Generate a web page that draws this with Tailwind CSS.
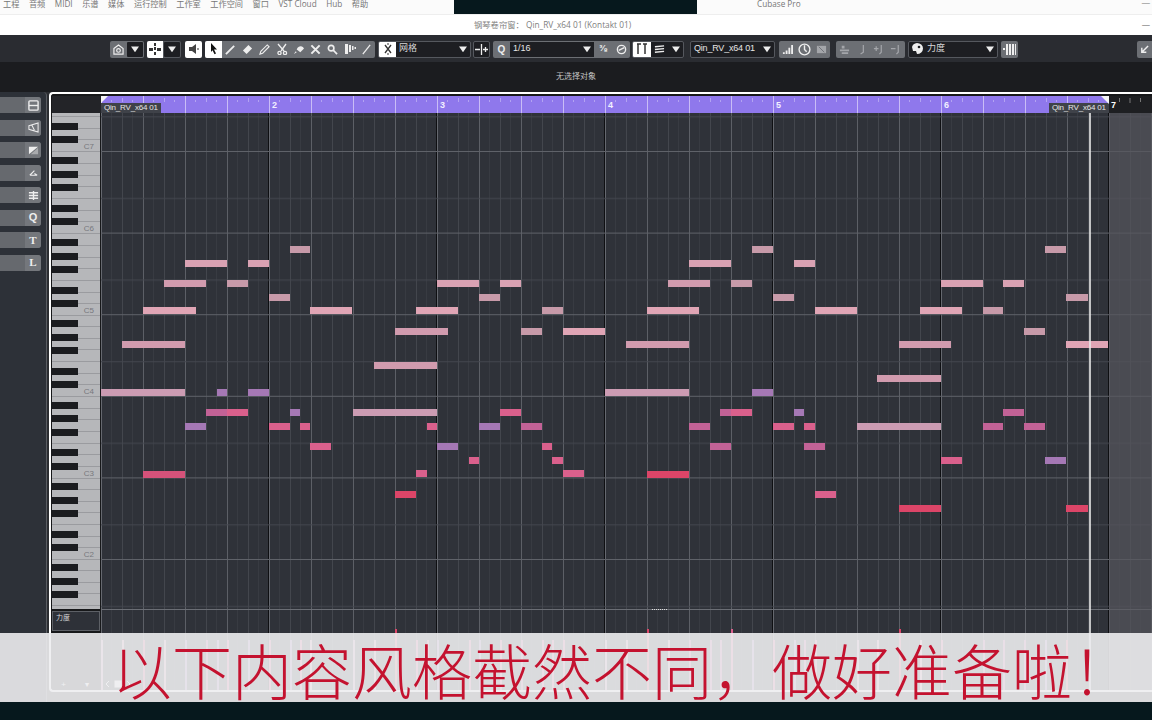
<!DOCTYPE html>
<html lang="zh">
<head>
    <meta charset="UTF-8">
    <meta name="viewport" content="width=device-width, initial-scale=1.0">
    <title>钢琴卷帘窗</title>
    <script src="https://cdn.jsdelivr.net/npm/@tailwindcss/browser@4"></script>
</head>
<body class="relative w-[1152px] h-[720px] overflow-hidden bg-[#2b2d31] flex flex-col font-['Liberation_Sans','Noto_Sans_CJK_SC',sans-serif]">

    <!-- menu bar -->
    <div class="h-[14px] shrink-0 bg-[#fbfbfb] flex overflow-hidden text-[8.2px] leading-[8px] text-[#777]">
        <div class="w-[454px] flex gap-[9.5px] pl-[3px] font-['Open_Sans','Noto_Sans_CJK_SC',sans-serif]">
            <span>工程</span><span>音频</span><span>MIDI</span><span>乐谱</span><span>媒体</span><span>运行控制</span><span>工作室</span><span>工作空间</span><span>窗口</span><span>VST Cloud</span><span>Hub</span><span>帮助</span>
        </div>
        <div class="w-[243px] bg-[#06181d]"></div>
        <div class="pl-[60px] font-['Open_Sans',sans-serif]">Cubase Pro</div>
        <div class="ml-auto pr-[2px]">—</div>
    </div>

    <!-- window title -->
    <div class="h-[21px] shrink-0 bg-white border-t border-[#eeeeee] flex items-center pl-[474px] pr-[2px] text-[8.3px] text-[#808080] font-['Open_Sans','Noto_Sans_CJK_SC',sans-serif]">
        <span>钢琴卷帘窗： Qin_RV_x64 01 (Kontakt 01)</span>
        <span class="ml-auto">—</span>
    </div>

    <!-- toolbar -->
    <div class="h-[27px] shrink-0 bg-[#2a2c31] flex items-center pl-[110px] pt-[1px] text-[9px] text-[#d8d8d8]">
        <div class="w-[34px] h-[17px] flex rounded-[2px] overflow-hidden bg-[#6c6f74]">
            <div class="w-[17px] flex items-center justify-center">
                <svg class="w-[11px] h-[11px]" viewBox="0 0 12 12" fill="none" stroke="#eee" stroke-width="1.3"><path d="M1 5l5-4 5 4v6H1z"/><circle cx="6" cy="7" r="2"/></svg>
            </div>
            <div class="w-[17px] m-[1px] rounded-[1px] bg-[#1d1e22] flex items-center justify-center">
                <svg class="w-[8px] h-[8px]" viewBox="0 0 10 10" fill="#eee"><path d="M0 2h10L5 9z"/></svg>
            </div>
        </div>
        <div class="ml-[3px] w-[34px] h-[17px] flex rounded-[2px] overflow-hidden bg-[#55585e]">
            <div class="w-[17px] bg-white flex items-center justify-center">
                <svg class="w-[12px] h-[12px]" viewBox="0 0 12 12" fill="#333"><path d="M5 0h2v3H5zM0 5h4v3H0zM8 5h4v3H8zM5 4h2v3H5zM5 9h2v3H5z"/></svg>
            </div>
            <div class="w-[17px] m-[1px] rounded-[1px] bg-[#1d1e22] flex items-center justify-center">
                <svg class="w-[8px] h-[8px]" viewBox="0 0 10 10" fill="#eee"><path d="M0 2h10L5 9z"/></svg>
            </div>
        </div>
        <div class="ml-[4px] w-[17px] h-[17px] rounded-[2px] bg-white flex items-center justify-center">
            <svg class="w-[12px] h-[12px]" viewBox="0 0 12 12" fill="#444"><path d="M1 4h3l4-3v10L4 8H1z"/><path d="M9 5h2v2H9z" fill="#999"/></svg>
        </div>

        <!-- tool group -->
        <div class="ml-[3px] w-[170px] h-[17px] flex rounded-[2px] overflow-hidden bg-[#6c6f74]">
            <div class="w-[17px] bg-white flex items-center justify-center">
                <svg class="w-[11px] h-[12px]" viewBox="0 0 11 12" fill="#111"><path d="M3 0l6 6.5H6l2 4-1.5.8-2-4L3 9z"/></svg>
            </div>
            <div class="w-[17px] flex items-center justify-center">
                <svg class="w-[11px] h-[11px]" viewBox="0 0 12 12" fill="none" stroke="#eee" stroke-width="2"><path d="M1 11L10 2"/></svg>
            </div>
            <div class="w-[17px] flex items-center justify-center">
                <svg class="w-[11px] h-[11px]" viewBox="0 0 12 12" fill="#eee"><path d="M7 1l4 4-6 6-4-4z"/></svg>
            </div>
            <div class="w-[17px] flex items-center justify-center">
                <svg class="w-[11px] h-[11px]" viewBox="0 0 12 12" fill="none" stroke="#eee" stroke-width="1.2"><path d="M1 11l1-3 7-7 2 2-7 7z"/></svg>
            </div>
            <div class="w-[17px] flex items-center justify-center">
                <svg class="w-[12px] h-[12px]" viewBox="0 0 12 12" fill="none" stroke="#eee" stroke-width="1.3"><path d="M2 1l6 7M10 1L5 8"/><circle cx="3.5" cy="10" r="1.6"/><circle cx="9" cy="10" r="1.6"/></svg>
            </div>
            <div class="w-[17px] flex items-center justify-center">
                <svg class="w-[11px] h-[11px]" viewBox="0 0 12 12" fill="#eee"><path d="M5 4a4 4 0 0 1 7 1L8 9 4 6z"/><path d="M3 8l1 1-3 2z"/></svg>
            </div>
            <div class="w-[17px] flex items-center justify-center">
                <svg class="w-[11px] h-[11px]" viewBox="0 0 12 12" fill="none" stroke="#eee" stroke-width="2.2"><path d="M1.500 1.500l9 9M10.500 1.500l-9 9"/></svg>
            </div>
            <div class="w-[17px] flex items-center justify-center">
                <svg class="w-[11px] h-[11px]" viewBox="0 0 12 12" fill="none" stroke="#eee" stroke-width="1.8"><circle cx="4.500" cy="4.500" r="3"/><path d="M7 7l4 4"/></svg>
            </div>
            <div class="w-[17px] flex items-center justify-center">
                <svg class="w-[12px] h-[12px]" viewBox="0 0 12 12" fill="#eee"><path d="M1 1h3v10H1zM5 2h2v7H5zM8 3h1.500v4H8zM10.500 4H12v2h-1.500z"/></svg>
            </div>
            <div class="w-[17px] flex items-center justify-center">
                <svg class="w-[11px] h-[11px]" viewBox="0 0 12 12" fill="none" stroke="#eee" stroke-width="1.400"><path d="M2 11l8-10"/></svg>
            </div>
        </div>

        <!-- grid type -->
        <div class="ml-[3px] w-[93px] h-[17px] flex rounded-[2px] overflow-hidden bg-[#1d1e22] border border-[#55585e]">
            <div class="w-[17px] bg-white flex items-center justify-center">
                <svg class="w-[12px] h-[12px]" viewBox="0 0 12 12" fill="none" stroke="#333" stroke-width="1.300"><path d="M3 2l6 8M9 2l-6 8"/><path d="M6 0v2M6 10v2" stroke-width="1"/></svg>
            </div>
            <div class="flex-1 flex items-center justify-between pl-[3px] pr-[3px]">
                <span>网格</span>
                <svg class="w-[8px] h-[8px]" viewBox="0 0 10 10" fill="#eee"><path d="M0 2h10L5 9z"/></svg>
            </div>
        </div>
        <div class="ml-[2px] w-[17px] h-[17px] rounded-[2px] bg-[#1d1e22] border border-[#55585e] flex items-center justify-center">
            <svg class="w-[13px] h-[11px]" viewBox="0 0 13 11" fill="none" stroke="#eee" stroke-width="1.300"><path d="M6.500 0v11M0 5.500h5M8 5.500h5M10.500 3v5"/></svg>
        </div>

        <!-- quantize -->
        <div class="ml-[3px] w-[137px] h-[17px] flex rounded-[2px] overflow-hidden bg-[#6c6f74]">
            <div class="w-[17px] flex items-center justify-center text-[10px] font-bold text-[#eee]">Q</div>
            <div class="w-[84px] my-[1px] bg-[#1d1e22] flex items-center justify-between px-[3px]">
                <span class="text-[#e6e6e6]">1/16</span>
                <svg class="w-[8px] h-[8px]" viewBox="0 0 10 10" fill="#eee"><path d="M0 2h10L5 9z"/></svg>
            </div>
            <div class="w-[18px] flex items-center justify-center text-[9px] font-bold text-[#eee]">⅜</div>
            <div class="w-[18px] flex items-center justify-center">
                <svg class="w-[11px] h-[11px]" viewBox="0 0 12 12" fill="none" stroke="#eee" stroke-width="1.500"><circle cx="6" cy="6" r="4.500"/><path d="M3 7l6-3"/></svg>
            </div>
        </div>

        <!-- length / colours -->
        <div class="ml-[2px] w-[52px] h-[17px] flex rounded-[2px] overflow-hidden bg-[#1d1e22] border border-[#55585e]">
            <div class="w-[18px] bg-white flex items-center justify-center">
                <svg class="w-[12px] h-[12px]" viewBox="0 0 12 12" fill="none" stroke="#333" stroke-width="1.500"><path d="M1 1h4M7 1h4M2 1v10M9 1v10"/></svg>
            </div>
            <div class="w-[17px] flex items-center justify-center">
                <svg class="w-[11px] h-[11px]" viewBox="0 0 12 12" fill="none" stroke="#eee" stroke-width="1.500"><path d="M1 3l10-1M1 6l10-1M1 9l10-1"/></svg>
            </div>
            <div class="flex-1 flex items-center justify-center">
                <svg class="w-[8px] h-[8px]" viewBox="0 0 10 10" fill="#eee"><path d="M0 2h10L5 9z"/></svg>
            </div>
        </div>

        <!-- part -->
        <div class="ml-[6px] w-[85px] h-[17px] rounded-[2px] bg-[#1d1e22] border border-[#55585e] flex items-center justify-between px-[3px] text-[#e6e6e6]">
            <span class="tracking-[-0.2px]">Qin_RV_x64 01</span>
            <svg class="w-[8px] h-[8px]" viewBox="0 0 10 10" fill="#eee"><path d="M0 2h10L5 9z"/></svg>
        </div>

        <div class="ml-[4px] w-[51px] h-[17px] flex rounded-[2px] bg-[#6c6f74]">
            <div class="w-[17px] flex items-center justify-center">
                <svg class="w-[11px] h-[11px]" viewBox="0 0 12 12" fill="#eee"><path d="M1 9h2v2H1zM4 7h2v4H4zM7 4h2v7H7zM10 1h2v10h-2z"/></svg>
            </div>
            <div class="w-[17px] flex items-center justify-center">
                <svg class="w-[13px] h-[13px]" viewBox="0 0 12 12" fill="none" stroke="#eee" stroke-width="1.300"><circle cx="6" cy="6" r="5"/><path d="M6 2v4l2 2"/></svg>
            </div>
            <div class="w-[17px] flex items-center justify-center">
                <svg class="w-[11px] h-[11px]" viewBox="0 0 12 12" fill="#a4a6aa"><path d="M1 2h10v8H1z"/><path d="M3 3l6 6" stroke="#6c6f74"/></svg>
            </div>
        </div>
        <div class="ml-[6px] w-[69px] h-[17px] flex rounded-[2px] bg-[#6c6f74] text-[#a4a6aa]">
            <div class="w-[17px] flex items-center justify-center">
                <svg class="w-[11px] h-[11px]" viewBox="0 0 12 12" fill="#a4a6aa"><path d="M3 2h3v3H3zM1 6h10v2H1zM3 9h7v2H3z"/></svg>
            </div>
            <div class="w-[17px] flex items-center justify-center">
                <svg class="w-[11px] h-[11px]" viewBox="0 0 12 12" fill="none" stroke="#a4a6aa" stroke-width="1.300"><path d="M8 1v8L5 11"/></svg>
            </div>
            <div class="w-[17px] flex items-center justify-center">
                <svg class="w-[11px] h-[11px]" viewBox="0 0 12 12" fill="none" stroke="#a4a6aa" stroke-width="1.300"><path d="M1 5h5M3.500 2.500v5M9 1v8l-2 2"/></svg>
            </div>
            <div class="w-[17px] flex items-center justify-center">
                <svg class="w-[11px] h-[11px]" viewBox="0 0 12 12" fill="none" stroke="#a4a6aa" stroke-width="1.300"><path d="M1 5h5M9 1v8l-2 2"/></svg>
            </div>
        </div>

        <!-- controller -->
        <div class="ml-[3px] w-[90px] h-[17px] rounded-[2px] bg-[#1d1e22] border border-[#55585e] flex items-center px-[2px]">
            <svg class="w-[13px] h-[12px]" viewBox="0 0 13 12" fill="#eee"><path d="M6 0a6 5.500 0 1 1 0 11l-1-3H2L1 4a6 5 0 0 1 5-4z"/><circle cx="8" cy="4" r="1.300" fill="#1d1e22"/></svg>
            <span class="ml-[3px]">力度</span>
            <svg class="ml-auto mr-[1px] w-[8px] h-[8px]" viewBox="0 0 10 10" fill="#eee"><path d="M0 2h10L5 9z"/></svg>
        </div>
        <div class="ml-[3px] w-[17px] h-[17px] rounded-[2px] bg-[#6c6f74] flex items-center justify-center">
            <svg class="w-[13px] h-[11px]" viewBox="0 0 13 11" fill="#eee"><path d="M3 0h2v11H3zM6 0h2v11H6zM9 0h2v11H9zM12 0h1v11h-1zM0 4h2v2H0z"/></svg>
        </div>
        <div class="ml-auto w-[15px] h-[17px] rounded-l-[2px] bg-[#6c6f74] flex items-center justify-center">
            <svg class="w-[9px] h-[9px]" viewBox="0 0 10 10" fill="none" stroke="#eee" stroke-width="1.600"><path d="M9 1L2 8M2 3v5h5"/></svg>
        </div>
    </div>

    <!-- info line -->
    <div class="h-[30px] shrink-0 bg-[#1b1c1f] flex items-center justify-center text-[8px] text-[#c4c4c4]">无选择对象</div>

    <!-- editor -->
    <div class="flex-1 flex min-h-0">
        <!-- left inspector -->
        <div class="w-[47px] shrink-0 bg-[#2d3138] border-r border-[#5a5d63] rounded-tr-[4px] flex flex-col gap-[6.500px] pt-[5px] pr-[5px]">
            <div class="h-[16px] flex rounded-r-[3px] bg-[#66696e]">
                <div class="w-[25px]"></div>
                <div class="flex-1 bg-[#74777c] rounded-r-[3px] flex items-center justify-center">
                    <svg class="w-[11px] h-[11px]" viewBox="0 0 12 12" fill="none" stroke="#eee" stroke-width="1.500"><rect x="1" y="1" width="10" height="10" rx="1"/><path d="M1 6h10"/></svg>
                </div>
            </div>
            <div class="h-[16px] flex rounded-r-[3px] bg-[#66696e]">
                <div class="w-[25px]"></div>
                <div class="flex-1 bg-[#74777c] rounded-r-[3px] flex items-center justify-center">
                    <svg class="w-[11px] h-[11px]" viewBox="0 0 12 12" fill="none" stroke="#eee" stroke-width="1.100"><path d="M1 4l10-3v10L1 8zM4 3l3 6"/></svg>
                </div>
            </div>
            <div class="h-[16px] flex rounded-r-[3px] bg-[#66696e]">
                <div class="w-[25px]"></div>
                <div class="flex-1 bg-[#74777c] rounded-r-[3px] flex items-center justify-center">
                    <svg class="w-[11px] h-[11px]" viewBox="0 0 12 12" fill="#eee"><path d="M1 2h10L1 10z"/><path d="M11 3v7H3z" fill="#a9abae"/></svg>
                </div>
            </div>
            <div class="h-[16px] flex rounded-r-[3px] bg-[#66696e]">
                <div class="w-[25px]"></div>
                <div class="flex-1 bg-[#74777c] rounded-r-[3px] flex items-center justify-center">
                    <svg class="w-[11px] h-[11px]" viewBox="0 0 12 12" fill="none" stroke="#eee" stroke-width="1.300"><path d="M2 9l5-5M2 9h8M7 7l3 2"/></svg>
                </div>
            </div>
            <div class="h-[16px] flex rounded-r-[3px] bg-[#66696e]">
                <div class="w-[25px]"></div>
                <div class="flex-1 bg-[#74777c] rounded-r-[3px] flex items-center justify-center">
                    <svg class="w-[11px] h-[11px]" viewBox="0 0 12 12" fill="none" stroke="#eee" stroke-width="1.500"><path d="M1 3h10M1 6h10M1 9h10M6 1v10"/></svg>
                </div>
            </div>
            <div class="h-[16px] flex rounded-r-[3px] bg-[#66696e]">
                <div class="w-[25px]"></div>
                <div class="flex-1 bg-[#74777c] rounded-r-[3px] flex items-center justify-center text-[11px] leading-none font-bold text-[#eee]">Q</div>
            </div>
            <div class="h-[16px] flex rounded-r-[3px] bg-[#66696e]">
                <div class="w-[25px]"></div>
                <div class="flex-1 bg-[#74777c] rounded-r-[3px] flex items-center justify-center text-[11px] leading-none font-bold text-[#eee] font-['Liberation_Serif',serif]">T</div>
            </div>
            <div class="h-[16px] flex rounded-r-[3px] bg-[#66696e]">
                <div class="w-[25px]"></div>
                <div class="flex-1 bg-[#74777c] rounded-r-[3px] flex items-center justify-center text-[11px] leading-none font-bold text-[#eee] font-['Liberation_Serif',serif]">L</div>
            </div>
        </div>

        <!-- white framed key editor -->
        <div class="ml-[2px] flex-1 min-w-0 h-[600px] border-2 border-r-0 border-white rounded-l-[4px] bg-[#17181a] pt-[2px] flex flex-col overflow-hidden">
            <!-- ruler -->
            <div class="h-[17px] shrink-0 flex">
                <div class="w-[49px] shrink-0 ml-[1px] bg-[#232428]"></div>
                <div class="relative w-[1008px] h-[17px] shrink-0 bg-[#8f78ec] grid grid-cols-6 text-[9px] font-bold text-[#f2f0ff]">
                    <svg class="absolute inset-0 w-full h-full" xmlns="http://www.w3.org/2000/svg">
                        <defs>
                            <pattern id="rulerTicks" width="42" height="17" patternUnits="userSpaceOnUse">
                                <path d="M.5 0v17" stroke="#c9bdf6" />
                                <path d="M21.500 2v4M10.500 4v2M31.500 4v2" stroke="#b3a3f2" />
                            </pattern>
                        </defs>
                        <rect width="1008" height="17" fill="url(#rulerTicks)" />
                    </svg>
                    <div class="relative h-[17px] flex items-end">
                        <span class="bg-[#3f4249] w-[60px] h-[10px] text-[8px] leading-[10px] font-normal text-[#e6e6e6] pl-[3px] tracking-[-0.2px] whitespace-nowrap">Qin_RV_x64 01</span>
                    </div>
                    <div class="relative h-[17px] pl-[3px] pt-[5px] leading-none">2</div>
                    <div class="relative h-[17px] pl-[3px] pt-[5px] leading-none">3</div>
                    <div class="relative h-[17px] pl-[3px] pt-[5px] leading-none">4</div>
                    <div class="relative h-[17px] pl-[3px] pt-[5px] leading-none">5</div>
                    <div class="relative h-[17px] pl-[3px] flex items-end justify-between">
                        <span class="pb-[3px] leading-none">6</span>
                        <span class="bg-[#3f4249] w-[60px] h-[10px] text-[8px] leading-[10px] font-normal text-[#e6e6e6] pl-[3px] tracking-[-0.2px] whitespace-nowrap">Qin_RV_x64 01</span>
                    </div>
                    <svg class="absolute inset-0 w-full h-full" xmlns="http://www.w3.org/2000/svg">
                        <path d="M0 0h7L0 7zM1008 0h-8l8 8z" fill="#f4f4f4" />
                    </svg>
                </div>
                <div class="flex-1 bg-[#1e1f22] pl-[2px] pt-[5px] text-[9px] font-bold text-white leading-none relative">
                    7
                    <svg class="absolute inset-0 w-full h-[7px]" xmlns="http://www.w3.org/2000/svg">
                        <path d="M10.500 2v4M21 2v5M31.500 2v4" stroke="#777" fill="none" />
                    </svg>
                </div>
            </div>

            <div class="flex-1 flex min-h-0">
                <!-- keyboard + controller label -->
                <div class="w-[48px] shrink-0 ml-[1px] mr-[1px] flex flex-col">
                    <div id="piano" class="relative h-[496px] shrink-0 bg-[#b6b7ba] overflow-hidden text-[8px] text-[#77787d]"></div>
                    <div class="mt-[2px] h-[20px] border border-[#5d6066] bg-[#2e3138] text-[7px] leading-[10px] text-[#d8d8d8] pl-[3px] pt-[1px]">力度</div>
                    <div class="mt-[50px] flex justify-around w-[46px] text-[8px] leading-none text-white">
                        <span>+</span><span>▾</span>
                    </div>
                </div>

                <!-- note grid -->
                <div id="grid" class="relative flex-1 min-w-0 bg-[#2f3239] overflow-hidden">
                    <svg class="absolute inset-0 w-full h-full" xmlns="http://www.w3.org/2000/svg">
                        <defs>
                            <pattern id="cols" width="168" height="20" patternUnits="userSpaceOnUse">
                                <path d="M10.500 0v20M31.500 0v20M52.500 0v20M73.500 0v20M94.500 0v20M115.500 0v20M136.500 0v20M157.500 0v20" stroke="#383b42" />
                                <path d="M21.500 0v20M63.500 0v20M105.500 0v20M147.500 0v20" stroke="#43464d" />
                                <path d="M42.500 0v20M84.500 0v20M126.500 0v20" stroke="#5c5f66" />
                                <path d="M.5 0v20" stroke="#65686f" />
                                <path d="M167.500 0v20" stroke="#0e0f12" />
                            </pattern>
                            <pattern id="rows" width="1100" height="81.600" y="38" patternUnits="userSpaceOnUse">
                                <path d="M0 .5h1100" stroke="#5f6269" />
                                <path d="M0 47.500h1100" stroke="#44474e" />
                            </pattern>
                        </defs>
                        <rect width="1100" height="600" fill="url(#cols)" />
                        <rect width="1100" height="496" fill="url(#rows)" />
                        <path d="M0 496.500h1100" stroke="#6b6e75" />
                    </svg>
                    <div class="absolute left-[1008px] top-0 bottom-0 w-[60px] bg-[#55565c]/70"></div>
                    <div id="notes"></div>
                    <div class="absolute left-[988px] top-[-17px] bottom-0 w-[2px] bg-[#e8e8e8]/80"></div>
                    <div class="absolute left-[551px] top-[496px] w-[15px] border-t border-dotted border-[#dddddd]"></div>
                    <svg class="absolute left-[4px] top-[567px] w-[26px] h-[8px]" viewBox="0 0 26 8" fill="none" stroke="#fff">
                        <path d="M4 1L1 4l3 3M22 1l3 3-3 3"/>
                        <rect x="10" y="1" width="6" height="6" fill="#fff"/>
                    </svg>
                </div>
            </div>
        </div>
    </div>

    <!-- subtitle band -->
    <div class="absolute left-0 right-0 top-[633px] h-[69px] bg-[#ededef]/90 flex items-center pl-[112px] overflow-hidden">
        <span class="text-[60px] leading-none whitespace-nowrap font-light text-[#c4122f] font-['Noto_Sans_CJK_SC',sans-serif] mt-[2px]">以下内容风格截然不同，做好准备啦！</span>
    </div>
    <div class="absolute left-0 right-0 top-[702px] bottom-0 bg-[#06181d]"></div>

    <script>
        // piano keys, octave = 81.6px, C2..C7 bottom edges in page coords
        const piano = document.getElementById('piano');
        const octaves = [[151, 'C7'], [233, 'C6'], [315, 'C5'], [396, 'C4'], [477.5, 'C3'], [559, 'C2'], [640, ''], [69.5, '']];
        let html = '';
        octaves.forEach(([bottom, name]) => {
            const b = bottom - 113;
            for (let i = 0; i < 7; i++) {
                html += `<div class="absolute left-0 right-0 h-px bg-[#9a9b9f]" style="top:${b - i * 11.66}px"></div>`;
            }
            [10.2, 23.8, 44.2, 57.8, 71.4].forEach(off => {
                html += `<div class="absolute left-0 w-[26px] h-[7px] bg-[#1b1c1f]" style="top:${b - off - 4.5}px"></div>`;
            });
            if (name) html += `<span class="absolute right-[6px] leading-none" style="top:${b - 8}px">${name}</span>`;
        });
        piano.innerHTML = html;

        // notes: start x, end x, centre y, colour (page coords)
        const colors = {
            a: '#c79aa9', b: '#d9a2b3', c: '#e0a5b5', d: '#d19bae', e: '#cc9cb3',
            p: '#a578b5', m: '#c26296', k: '#da608c', h: '#d5527a', r: '#dc4568'
        };
        const notes = [
            [290,310,249,'a'],[185,227,263,'b'],[248,269,263,'b'],[164,206,283,'d'],[227,248,283,'a'],[269,290,297,'a'],
            [143,196,310,'c'],[122,185,344,'d'],[101,185,392,'e'],[217,227,392,'p'],[248,269,392,'p'],[206,227,412,'m'],
            [227,248,412,'k'],[290,300,412,'p'],[185,206,426,'p'],[269,290,426,'k'],[300,310,426,'k'],[310,331,446,'k'],[143,185,474,'h'],
            [310,352,310,'c'],[437,479,283,'b'],[500,521,283,'b'],[479,500,297,'a'],[416,458,310,'c'],[542,563,310,'a'],
            [395,448,331,'d'],[521,542,331,'a'],[563,605,331,'c'],[374,437,365,'d'],[353,437,412,'e'],[500,521,412,'k'],
            [427,437,426,'k'],[479,500,426,'p'],[521,542,426,'m'],[437,458,446,'p'],[542,552,446,'k'],[469,479,460,'k'],
            [552,563,460,'k'],[416,427,473,'k'],[563,584,473,'k'],[395,416,494,'r'],
            [752,773,249,'a'],[689,731,263,'b'],[794,815,263,'b'],[668,710,283,'d'],[731,752,283,'a'],[773,794,297,'a'],
            [647,699,310,'c'],[815,857,310,'c'],[626,689,344,'d'],[605,689,392,'e'],[752,773,392,'p'],[720,731,412,'m'],
            [731,752,412,'k'],[794,804,412,'p'],[689,710,426,'m'],[773,794,426,'k'],[804,815,426,'k'],[710,731,446,'m'],
            [804,825,446,'m'],[647,689,474,'r'],[815,836,494,'k'],
            [1045,1066,249,'a'],[941,983,283,'b'],[1003,1024,283,'b'],[1066,1088,297,'a'],[920,962,310,'c'],[983,1003,310,'a'],
            [1024,1045,331,'a'],[899,951,344,'d'],[1066,1108,344,'c'],[877,941,378,'d'],[857,941,426,'e'],[1003,1024,412,'m'],
            [983,1003,426,'m'],[1024,1045,426,'m'],[941,962,460,'k'],[1045,1066,460,'p'],[899,941,508,'r'],[1066,1088,508,'r']
        ];
        const tall = [395, 647, 731, 899];
        document.getElementById('notes').innerHTML = notes.map(([x1, x2, y, c]) => {
            const left = x1 - 101;
            const velTop = (tall.includes(x1) ? 629 : 640) - 113;
            return `<div class="absolute h-[7px]" style="left:${left}px;top:${y - 3.5 - 113}px;width:${x2 - x1}px;background:${colors[c]}"></div>`
                + `<div class="absolute w-[2px] h-[70px]" style="left:${left}px;top:${velTop}px;background:${colors[c]}"></div>`;
        }).join('');
    </script>
</body>
</html>
